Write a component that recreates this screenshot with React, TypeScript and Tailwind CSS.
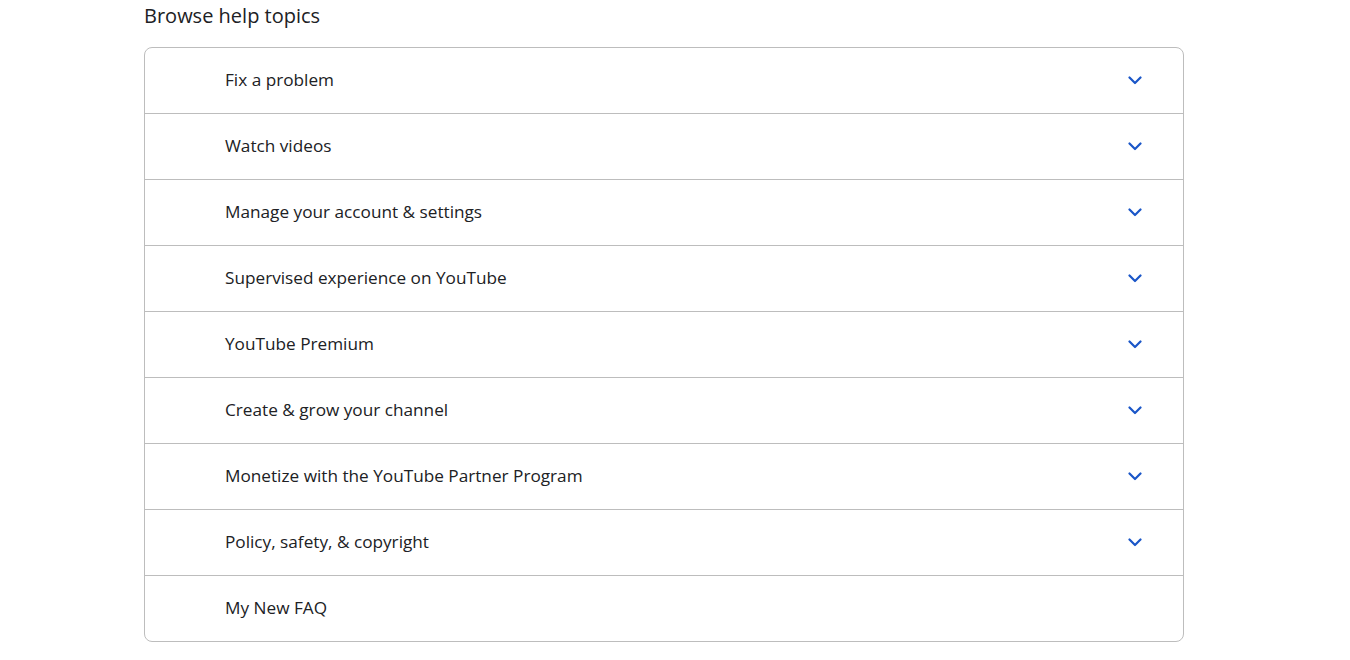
const topics = [
  { title: "Fix a problem", expandable: true },
  { title: "Watch videos", expandable: true },
  { title: "Manage your account & settings", expandable: true },
  { title: "Supervised experience on YouTube", expandable: true },
  { title: "YouTube Premium", expandable: true },
  { title: "Create & grow your channel", expandable: true },
  { title: "Monetize with the YouTube Partner Program", expandable: true },
  { title: "Policy, safety, & copyright", expandable: true },
  { title: "My New FAQ", expandable: false },
];

function Chevron() {
  return (
    <svg width="14" height="9" viewBox="0 0 14 9" className="text-[#1a56c8]">
      <path d="M1.5 1.5 L7 7 L12.5 1.5" fill="none" stroke="currentColor" strokeWidth="2.2" strokeLinecap="round" strokeLinejoin="round" />
    </svg>
  );
}

export default function App() {
  return (
    <div className="min-h-screen bg-white pl-[144px] text-[#202124]" style={{ fontFamily: "'Open Sans', Roboto, sans-serif" }}>
      {/* Header */}
      <h2 className="h-[33px] pt-[4px] text-[20px] leading-[24px]">Browse help topics</h2>

      {/* Topics list */}
      <div className="mt-[14px] w-[1040px] rounded-[8px] border border-[#bdbdbd]">
        {topics.map((t, i) => (
          <div
            key={t.title}
            className={`flex items-center justify-between pl-[80px] pr-[41px] ${i > 0 ? "h-[66px] border-t border-[#bdbdbd]" : "h-[65px]"}`}
          >
            <span className="pb-[2px] text-[17.2px]">{t.title}</span>
            {t.expandable && <Chevron />}
          </div>
        ))}
      </div>
    </div>
  );
}
